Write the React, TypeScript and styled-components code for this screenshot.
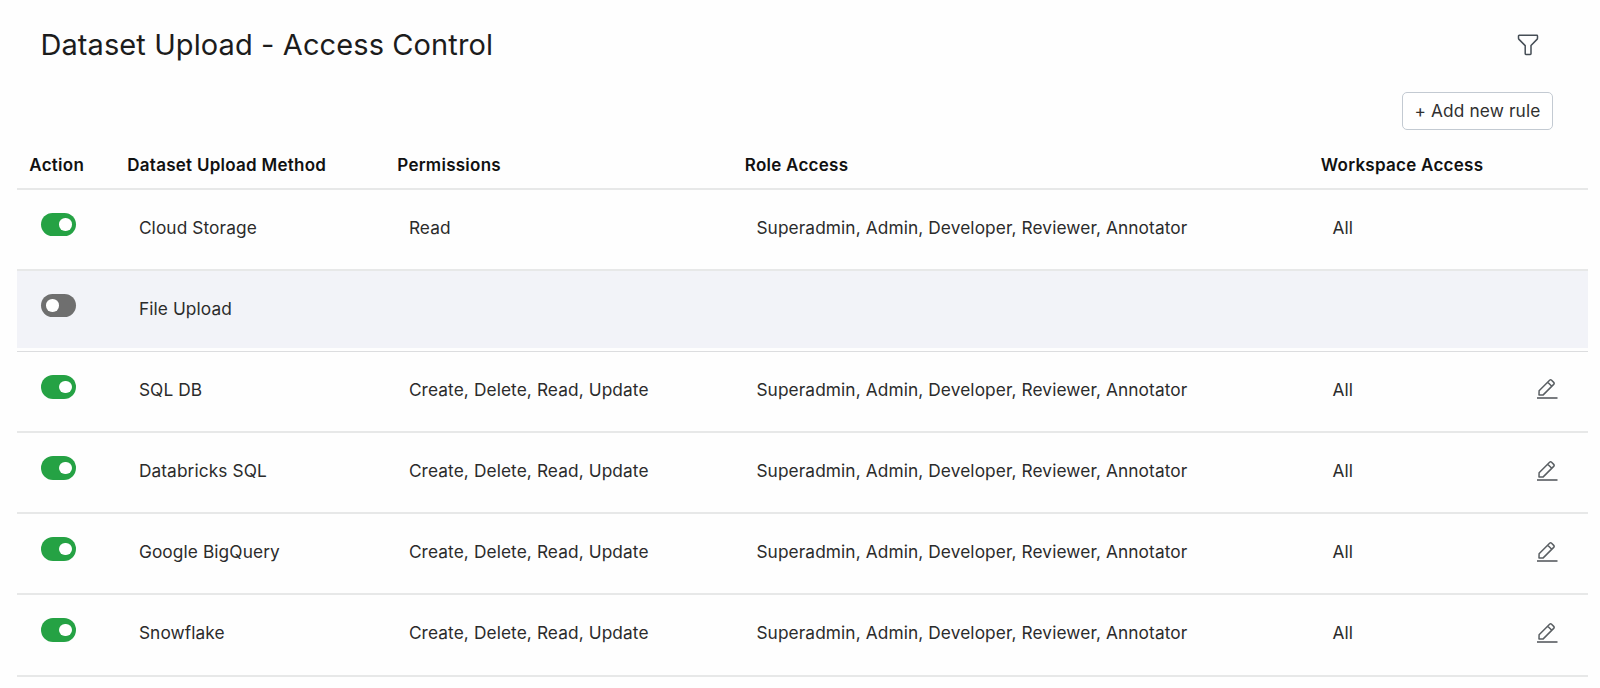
import React from 'react'
import styled, { createGlobalStyle } from 'styled-components'

const GlobalStyle = createGlobalStyle`
  * {
    box-sizing: border-box;
  }

  body {
    margin: 0;
    background: #fefefe;
    color: #2b2b2b;
    font-family: Inter, 'Liberation Sans', sans-serif;
    font-size: 17.3px;
    font-weight: 400;
  }
`

const Page = styled.main`
  width: 1600px;
  height: 688px;
  padding: 28px 12px 0 17.4px;
  overflow: hidden;
`

const TitleBar = styled.header`
  display: flex;
  align-items: center;
  justify-content: space-between;
  height: 34px;
  padding: 0 48.6px 0 23px;
`

const Title = styled.h1`
  margin: 0;
  font-size: 29px;
  font-weight: 400;
  letter-spacing: 0.1px;
  line-height: 34px;
  color: #1c1c1c;
  white-space: nowrap;
`

const Toolbar = styled.div`
  display: flex;
  justify-content: flex-end;
  margin-top: 30px;
  padding-right: 35px;
`

const AddButton = styled.button`
  width: 151px;
  height: 38px;
  padding: 0 0 2px;
  border: 1.5px solid #c3cad2;
  border-radius: 5px;
  background: #fff;
  color: #303030;
  font-family: inherit;
  font-size: 17.3px;
  font-weight: 400;
  letter-spacing: 0.12px;
  white-space: nowrap;
`

const Table = styled.div`
  display: flex;
  flex-direction: column;
`

const columns = '98px 270px 347.5px 576px 1fr 74px'

const HeaderRow = styled.div`
  display: grid;
  grid-template-columns: ${columns};
  align-items: center;
  height: 60px;
  padding-top: 11px;
  border-bottom: 2px solid #e7e8e8;
`

const HeaderCell = styled.div`
  padding-left: 11.9px;
  color: #111;
  font-size: 17px;
  font-weight: 600;
  letter-spacing: 0.26px;
  white-space: nowrap;
`

const Row = styled.div<{ $disabled: boolean }>`
  display: grid;
  grid-template-columns: ${columns};
  height: 81.1px;
  border-bottom: ${props =>
    props.$disabled ? '1px solid #dcdddf' : '2px solid #e7e8e8'};
  background: ${props => (props.$disabled ? '#f2f3f8' : 'transparent')};
  background-clip: content-box;
  padding-bottom: ${props => (props.$disabled ? '3px' : '0')};
`

const Cell = styled.div`
  padding: 27px 0 0 23.5px;
  letter-spacing: 0.1px;
  line-height: 22px;
  white-space: nowrap;
`

const ToggleCell = styled.div`
  padding: 22.9px 0 0 23.5px;
`

const Toggle = styled.button<{ $on: boolean }>`
  display: flex;
  align-items: center;
  justify-content: ${props => (props.$on ? 'flex-end' : 'flex-start')};
  width: 35px;
  height: 23.5px;
  padding: 0 4px 0 5.5px;
  border: none;
  border-radius: 12px;
  background: ${props => (props.$on ? '#25a244' : '#6f6f6f')};
`

const Knob = styled.span`
  width: 12.5px;
  height: 12.5px;
  border-radius: 50%;
  background: #fff;
`

const EditCell = styled.div`
  padding: 26.3px 0 0 22.7px;
`

const FilterIcon: React.FC = () => (
  <svg width="22" height="22" viewBox="0 0 22 22" fill="none">
    <path
      d="M2.2 1.3H19.8Q20.5 1.3 20.5 2V4.2Q20.5 4.9 20 5.4L14 11.6V19.8Q14 20.5 13.3 20.5H8.9Q8.2 20.5 8.2 19.8V11.6L2 5.4Q1.5 4.9 1.5 4.2V2Q1.5 1.3 2.2 1.3Z"
      stroke="#454d55"
      strokeWidth="1.5"
      strokeLinejoin="round"
    />
  </svg>
)

const EditIcon: React.FC = () => (
  <svg width="21" height="22" viewBox="0 0 21 22" fill="none">
    <path d="M0 20H20.5" stroke="#6a6e72" strokeWidth="1.8" />
    <path
      d="M2 16.9L2.1 12.8L12.6 2.3Q13.6 1.3 14.6 2.3L16.7 4.4Q17.7 5.4 16.7 6.4L6.2 16.9ZM10.7 4.2L14.8 8.3"
      stroke="#5a5f63"
      strokeWidth="1.5"
      strokeLinejoin="round"
    />
  </svg>
)

interface Rule {
  method: string
  enabled: boolean
  permissions?: string
  editable?: boolean
}

const allPermissions = 'Create, Delete, Read, Update'
const roles = 'Superadmin, Admin, Developer, Reviewer, Annotator'

const rules: Rule[] = [
  { method: 'Cloud Storage', enabled: true, permissions: 'Read' },
  { method: 'File Upload', enabled: false },
  { method: 'SQL DB', enabled: true, permissions: allPermissions, editable: true },
  { method: 'Databricks SQL', enabled: true, permissions: allPermissions, editable: true },
  { method: 'Google BigQuery', enabled: true, permissions: allPermissions, editable: true },
  { method: 'Snowflake', enabled: true, permissions: allPermissions, editable: true }
]

const App: React.FC = () => {
  return (
    <Page>
      <GlobalStyle />
      <TitleBar>
        <Title>Dataset Upload - Access Control</Title>
        <FilterIcon />
      </TitleBar>
      <Toolbar>
        <AddButton>+ Add new rule</AddButton>
      </Toolbar>

      <Table>
        <HeaderRow>
          <HeaderCell>Action</HeaderCell>
          <HeaderCell>Dataset Upload Method</HeaderCell>
          <HeaderCell>Permissions</HeaderCell>
          <HeaderCell>Role Access</HeaderCell>
          <HeaderCell>Workspace Access</HeaderCell>
        </HeaderRow>
        {rules.map(rule => (
          <Row key={rule.method} $disabled={!rule.enabled}>
            <ToggleCell>
              <Toggle $on={rule.enabled} aria-pressed={rule.enabled}>
                <Knob />
              </Toggle>
            </ToggleCell>
            <Cell>{rule.method}</Cell>
            <Cell>{rule.permissions}</Cell>
            <Cell>{rule.enabled && roles}</Cell>
            <Cell>{rule.enabled && 'All'}</Cell>
            <EditCell>{rule.editable && <EditIcon />}</EditCell>
          </Row>
        ))}
      </Table>
    </Page>
  )
}

export default App
